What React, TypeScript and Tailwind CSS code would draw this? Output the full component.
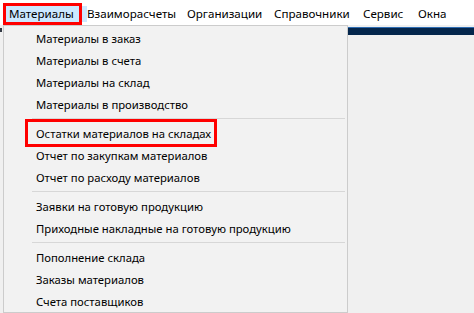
import React from "react";

const font = { fontFamily: '"Noto Sans", "Segoe UI", sans-serif' };

function Item({ children }: { children: React.ReactNode }) {
  return (
    <div className="h-[22px] pl-[32px] text-[11.3px] leading-[22px] text-black whitespace-nowrap">
      {children}
    </div>
  );
}

function Sep() {
  return <div className="h-[7px] pt-[2px] ml-[28px] mr-[2px]"><div className="h-px bg-[#d7d7d7]" /></div>;
}

const menus: { label: string; w: string }[] = [
  { label: "Материалы", w: "w-[81px]" },
  { label: "Взаиморасчеты", w: "w-[100px]" },
  { label: "Организации", w: "w-[87px]" },
  { label: "Справочники", w: "w-[89px]" },
  { label: "Сервис", w: "w-[55px]" },
  { label: "Окна", w: "w-[40px]" },
];

export default function App() {
  return (
    <div className="relative w-[474px] h-[313px] overflow-hidden bg-[#f0f0f0]" style={font}>
      <div className="h-[25px] bg-white flex items-start pt-[6px]">
        <div className="w-[6px]" />
        {menus.map((m, i) => (
          <div
            key={m.label}
            className={
              "h-[16px] leading-[16px] text-[11.6px] text-black whitespace-nowrap " +
              m.w +
              " " +
              (i === 0 ? "bg-[#cce8ff] pl-[3px]" : "")
            }
          >
            {m.label}
          </div>
        ))}
      </div>
      <div className="absolute left-[3px] top-[3px] w-[79px] h-[22px] border-[3px] border-[#ff0000]" />
      <div className="flex h-[288px]">
        <div className="w-[3px] flex flex-col">
          <div className="mt-[3px] w-[2px] h-[4px] bg-[#333a44]" />
        </div>
        <div className="relative w-[345px] bg-[#f2f2f2] border border-[#cccccc] pt-[2px]">
          <Item>Материалы в заказ</Item>
          <Item>Материалы в счета</Item>
          <Item>Материалы на склад</Item>
          <Item>Материалы в производство</Item>
          <Sep />
          <Item>Остатки материалов на складах</Item>
          <Item>Отчет по закупкам материалов</Item>
          <Item>Отчет по расходу материалов</Item>
          <Sep />
          <Item>Заявки на готовую продукцию</Item>
          <Item>Приходные накладные на готовую продукцию</Item>
          <Sep />
          <Item>Пополнение склада</Item>
          <Item>Заказы материалов</Item>
          <Item>Счета поставщиков</Item>
          <div className="absolute left-[21px] top-[93px] w-[192px] h-[28px] border-[3px] border-[#ff0000]" />
        </div>
        <div className="flex-1 flex flex-col">
          <div className="mt-[2px] h-[8px] bg-[#04264c] border-t border-[#2f6db3]" />
        </div>
      </div>
    </div>
  );
}
